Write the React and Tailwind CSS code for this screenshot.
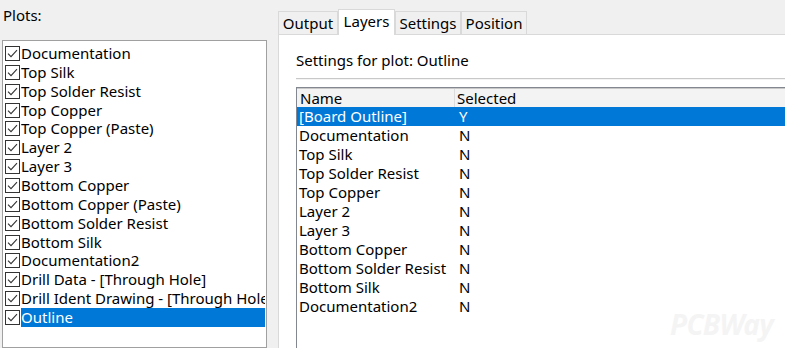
import React from 'react';

const plots = [
  'Documentation',
  'Top Silk',
  'Top Solder Resist',
  'Top Copper',
  'Top Copper (Paste)',
  'Layer 2',
  'Layer 3',
  'Bottom Copper',
  'Bottom Copper (Paste)',
  'Bottom Solder Resist',
  'Bottom Silk',
  'Documentation2',
  'Drill Data - [Through Hole]',
  'Drill Ident Drawing - [Through Hole]',
  'Outline',
];

const layers = [
  ['[Board Outline]', 'Y'],
  ['Documentation', 'N'],
  ['Top Silk', 'N'],
  ['Top Solder Resist', 'N'],
  ['Top Copper', 'N'],
  ['Layer 2', 'N'],
  ['Layer 3', 'N'],
  ['Bottom Copper', 'N'],
  ['Bottom Solder Resist', 'N'],
  ['Bottom Silk', 'N'],
  ['Documentation2', 'N'],
];

const tabs = [
  { label: 'Output', w: 'w-[60px]' },
  { label: 'Layers', w: 'w-[57px]', active: true },
  { label: 'Settings', w: 'w-[66px]' },
  { label: 'Position', w: 'w-[66px]' },
];

const CheckBox = () => (
  <div className="w-[15px] h-[15px] border border-[#333333] bg-white flex-shrink-0 flex items-center justify-center">
    <svg width="13" height="13" viewBox="0 0 13 13">
      <path d="M2 6.6 L5 9.6 L11 3.2" fill="none" stroke="#333333" strokeWidth="1.1" />
    </svg>
  </div>
);

const PlotRow = ({ name, selected }) => (
  <div className="h-[18.86px] flex items-center">
    <CheckBox />
    <div
      className={`ml-[1px] flex-1 h-full flex items-center whitespace-nowrap overflow-hidden ${
        selected ? 'bg-[#0078d7] text-white' : 'text-black'
      }`}
    >
      {name}
    </div>
  </div>
);

export default function App() {
  return (
    <div className="w-[785px] h-[348px] bg-[#f0f0f0] flex overflow-hidden text-[15px] leading-none text-black font-['Noto_Sans',sans-serif]">
      {/* left: plot list */}
      <div className="w-[278px] flex flex-col min-h-0">
        <div className="h-[40px] pl-[3px] pt-[8px]">Plots:</div>
        <div className="ml-[2px] w-[265px] flex-1 min-h-0 overflow-hidden border border-[#a0a0a0] bg-white pl-[2px] pt-[3px] pr-[1px]">
          {plots.map((p, i) => (
            <PlotRow key={p} name={p} selected={i === plots.length - 1} />
          ))}
        </div>
      </div>

      {/* right: tabs */}
      <div className="flex-1 flex flex-col min-h-0">
        <div className="h-[34px] pt-[8px] flex items-end">
          {tabs.map((t) =>
            t.active ? (
              <div
                key={t.label}
                className={`${t.w} h-[26px] -mb-px bg-white border border-b-0 border-[#d9d9d9] flex items-center justify-center pb-[3px] relative z-10`}
              >
                {t.label}
              </div>
            ) : (
              <div
                key={t.label}
                className={`${t.w} h-[23px] bg-[#f0f0f0] border border-b-0 border-[#d9d9d9] flex items-center justify-center`}
              >
                {t.label}
              </div>
            )
          )}
        </div>
        <div className="flex-1 min-h-0 overflow-hidden bg-white border-l border-t border-[#d9d9d9] pl-[17px] relative">
          <div className="h-[43px] flex items-end pb-[10px]">Settings for plot: Outline</div>
          <div className="h-[2px] border-t border-[#c8c8c8] bg-[#f4f4f4]" />
          <div className="mt-[7px] border-l border-t border-[#828790] h-[300px]">
            <div className="h-[19px] flex bg-[#f3f3f3] border-t border-[#c8c8c8]">
              <div className="w-[158px] pl-[3px] flex items-center border-r border-[#dcdcdc]">Name</div>
              <div className="flex-1 pl-[2px] flex items-center">Selected</div>
            </div>
            {layers.map(([n, s], i) => (
              <div
                key={n}
                className={`h-[19px] flex items-center ${i === 0 ? 'bg-[#0078d7] text-white' : ''}`}
              >
                <div className="w-[158px] pl-[2px] whitespace-nowrap">{n}</div>
                <div className="pl-[4px]">{s}</div>
              </div>
            ))}
          </div>
          {/* faint watermark */}
          <div className="absolute right-[12px] bottom-[10px] leading-none">
            <span className="text-[28px] italic font-bold text-[#f4f4f4] tracking-tight">PCBWay</span>
          </div>
        </div>
      </div>
    </div>
  );
}
